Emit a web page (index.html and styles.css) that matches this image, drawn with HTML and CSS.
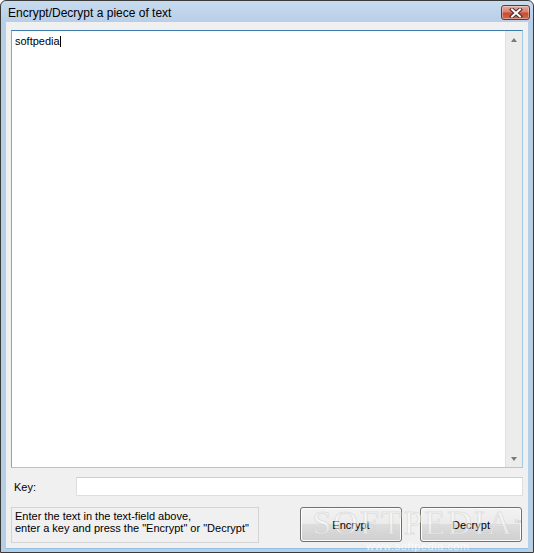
FILE: index.html
```html
<!DOCTYPE html>
<html>
<head>
<meta charset="utf-8">
<link rel="stylesheet" href="styles.css">
</head>
<body>
<div class="window">
  <div class="titlebar">
    <span class="title">Encrypt/Decrypt a piece of text</span>
    <div class="close">
      <svg width="14" height="10" viewBox="0 0 14 10">
        <path d="M3 1.5 L11 8.5 M11 1.5 L3 8.5" stroke="#4a2b2b" stroke-width="4" stroke-linecap="square" fill="none"/>
        <path d="M3 1.5 L11 8.5 M11 1.5 L3 8.5" stroke="#ffffff" stroke-width="2" stroke-linecap="square" fill="none"/>
      </svg>
    </div>
  </div>
  <div class="client">
    <div class="textarea">
      <div class="text-content"><span>softpedia</span><span class="caret"></span></div>
      <div class="scrollbar">
        <div class="sb-btn"><span class="arrow-up"></span></div>
        <div class="sb-track"></div>
        <div class="sb-btn"><span class="arrow-down"></span></div>
      </div>
    </div>
    <div class="key-row">
      <span class="key-label">Key:</span>
      <div class="key-input"></div>
    </div>
    <div class="bottom-row">
      <div class="info">Enter the text in the text-field above,<br>enter a key and press the "Encrypt" or "Decrypt"</div>
      <div class="buttons">
        <div class="btn">Encrypt</div>
        <div class="btn">Decrypt</div>
      </div>
    </div>
    <div class="watermark">
      <span class="wm-big">SOFTPEDIA<sup>™</sup></span>
      <span class="wm-small">www.softpedia.com</span>
    </div>
  </div>
</div>
</body>
</html>
```

FILE: styles.css
```css
html, body {
  margin: 0;
  padding: 0;
  background: #ffffff;
}
.window {
  width: 534px;
  height: 553px;
  box-sizing: border-box;
  border: 1px solid #3a3a3a;
  border-radius: 6px 6px 0 0;
  background: linear-gradient(to bottom, #c8dbef 0px, #b7cee7 22px, #b7cee7 100%);
  display: flex;
  flex-direction: column;
  font-family: "Liberation Sans", Arial, sans-serif;
  overflow: hidden;
}
.titlebar {
  height: 21px;
  display: flex;
  align-items: flex-start;
  flex-shrink: 0;
}
.title {
  font-size: 12px;
  color: #000;
  margin-left: 7px;
  margin-top: 5px;
  line-height: 14px;
}
.close {
  margin-left: auto;
  margin-right: 3px;
  margin-top: 4px;
  width: 27px;
  height: 13px;
  border: 1px solid #6a3434;
  border-radius: 3px;
  background: linear-gradient(to bottom, #e9a99b 0%, #d9826f 45%, #c64c33 55%, #d0674e 100%);
  display: flex;
  align-items: center;
  justify-content: center;
  box-shadow: inset 0 0 0 1px rgba(255,255,255,0.35);
}
.close svg { display: block; }
.client {
  position: relative;
  flex: 1;
  margin: 0 5px 3px 5px;
  background: #f0f0f0;
  padding: 8px 5px 0 5px;
  display: flex;
  flex-direction: column;
  border-bottom: 1px solid #8ec1e6;
}
.textarea {
  height: 438px;
  box-sizing: border-box;
  background: #fff;
  border: 1px solid #a4c9e3;
  border-top-color: #3d7bad;
  border-left-color: #7fa9cf;
  display: flex;
}
.text-content {
  flex: 1;
  padding: 4px 0 0 3px;
  font-size: 11px;
  line-height: 13px;
  color: #000;
  display: flex;
  align-items: flex-start;
}
.caret {
  display: inline-block;
  width: 1px;
  height: 11px;
  background: #000;
  margin-top: 1px;
}
.scrollbar {
  width: 16px;
  display: flex;
  flex-direction: column;
  background: #ececec;
  border-left: 1px solid #e0e0e0;
}
.sb-btn {
  height: 17px;
  display: flex;
  align-items: center;
  justify-content: center;
}
.sb-track { flex: 1; }
.arrow-up {
  width: 0; height: 0;
  border-left: 3.5px solid transparent;
  border-right: 3.5px solid transparent;
  border-bottom: 4px solid #7a7a7a;
}
.arrow-down {
  width: 0; height: 0;
  border-left: 3.5px solid transparent;
  border-right: 3.5px solid transparent;
  border-top: 4px solid #7a7a7a;
}
.key-row {
  margin-top: 9px;
  height: 19px;
  display: flex;
  align-items: center;
}
.key-label {
  width: 62px;
  padding-left: 3px;
  font-size: 11px;
  color: #000;
}
.key-input {
  flex: 1;
  height: 19px;
  box-sizing: border-box;
  background: #fff;
  border: 1px solid #dedede;
  border-top-color: #cdcdcd;
}
.bottom-row {
  margin-top: 11px;
  display: flex;
  align-items: flex-start;
}
.info {
  width: 248px;
  height: 36px;
  box-sizing: border-box;
  border: 1px solid #d4d4d4;
  background: #f0f0f0;
  padding: 2px 0 0 3px;
  font-size: 11px;
  line-height: 12px;
  color: #000;
  white-space: nowrap;
}
.buttons {
  margin-left: auto;
  margin-right: 1px;
  display: flex;
  gap: 18px;
}
.btn {
  width: 102px;
  height: 35px;
  box-sizing: border-box;
  border: 1px solid #707070;
  border-radius: 3px;
  background: linear-gradient(to bottom, #f2f2f2 0%, #ebebeb 50%, #dddddd 50%, #cfcfcf 100%);
  box-shadow: inset 0 0 0 1px #fcfcfc;
  display: flex;
  align-items: center;
  justify-content: center;
  font-size: 11px;
  color: #000;
}
.watermark {
  position: absolute;
  left: 322px;
  top: 484px;
  width: 180px;
  display: flex;
  flex-direction: column;
  align-items: center;
  pointer-events: none;
}
.wm-big {
  font-family: "Liberation Serif", serif;
  font-size: 34px;
  letter-spacing: 2px;
  color: rgba(255,255,255,0.5);
  -webkit-text-stroke: 1px rgba(200,200,200,0.45);
  line-height: 34px;
}
.wm-big sup { font-size: 8px; vertical-align: top; -webkit-text-stroke: 0; color: rgba(170,170,170,0.6); }
.wm-small {
  font-size: 11px;
  color: rgba(255,255,255,0.7);
  line-height: 12px;
  letter-spacing: 0.5px;
}
```
